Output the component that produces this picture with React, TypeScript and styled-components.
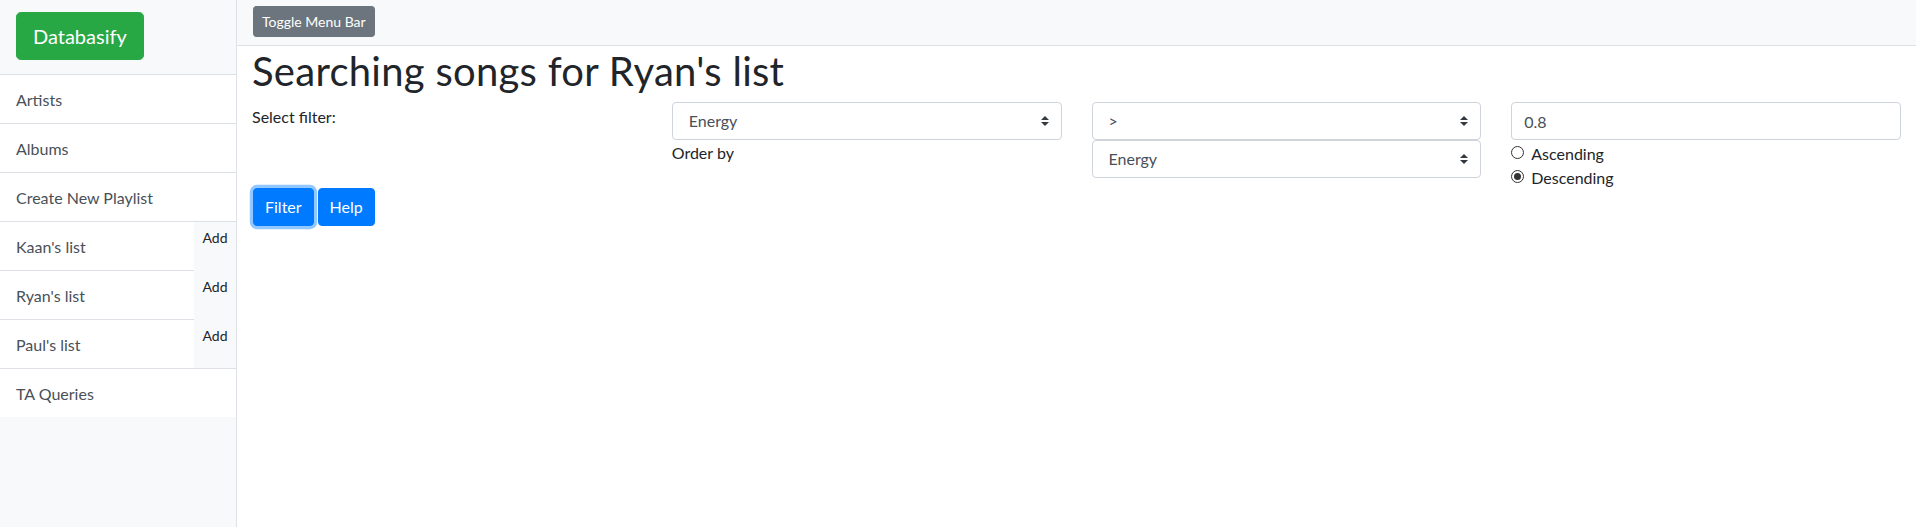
import React from "react";
import styled, { createGlobalStyle } from "styled-components";

const GlobalStyle = createGlobalStyle`
  html, body { margin: 0; padding: 0; }
  body {
    font-family: Lato, "Noto Sans", "Liberation Sans", sans-serif;
    font-size: 16px;
    line-height: 1.5;
    color: #212529;
    background: #fff;
  }
  * { box-sizing: border-box; }
`;

const Layout = styled.div`
  display: flex;
  min-height: 527px;
`;

const Sidebar = styled.nav`
  width: 237px;
  flex: 0 0 237px;
  background: #f8f9fa;
  border-right: 1px solid #dee2e6;
  display: flex;
  flex-direction: column;
`;

const SidebarHeader = styled.div`
  height: 75px;
  padding: 12px 16px 0;
  border-bottom: 1px solid #dee2e6;
`;

const BrandButton = styled.button`
  height: 48px;
  padding: 8px 16px;
  font: inherit;
  font-size: 20px;
  line-height: 1.5;
  color: #fff;
  background: #28a745;
  border: 1px solid #28a745;
  border-radius: 4.8px;
`;

const NavList = styled.div`
  display: flex;
  flex-direction: column;
`;

const NavItem = styled.a<{ $noBorder?: boolean }>`
  display: block;
  flex: 1;
  padding: 13px 16px 11px;
  height: ${(p) => (p.$noBorder ? "48px" : "49px")};
  background: #fff;
  color: #495057;
  text-decoration: none;
  border-bottom: ${(p) => (p.$noBorder ? "none" : "1px solid #dee2e6")};
`;

const PlaylistRow = styled.div<{ $last?: boolean }>`
  display: flex;
  border-bottom: ${(p) => (p.$last ? "1px solid #dee2e6" : "none")};
`;

const AddCell = styled.div`
  width: 42px;
  flex: 0 0 42px;
  padding: 5px 0 0;
  text-align: center;
  font-size: 14px;
  line-height: 1.5;
  color: #212529;
  background: #f8f9fa;
`;

const Main = styled.main`
  flex: 1;
  display: flex;
  flex-direction: column;
  min-width: 0;
`;

const TopBar = styled.div`
  height: 46px;
  padding: 6px 16px 0;
  background: #f8f9fa;
  border-bottom: 1px solid #dee2e6;
`;

const ToggleButton = styled.button`
  height: 31px;
  padding: 4px 8px;
  font: inherit;
  font-size: 14px;
  line-height: 1.5;
  color: #fff;
  background: #6c757d;
  border: 1px solid #6c757d;
  border-radius: 3.2px;
`;

const Heading = styled.h1`
  margin: 0 0 8px;
  padding: 2px 15px 0;
  font-size: 40px;
  font-weight: 400;
  line-height: 46px;
  letter-spacing: 0.27px;
  color: #212529;
`;

const FilterGrid = styled.div`
  display: grid;
  grid-template-columns: repeat(4, 1fr);
`;

const Col = styled.div`
  padding: 0 15px;
  display: flex;
  flex-direction: column;
`;

const Label = styled.label<{ $pt?: number }>`
  display: block;
  padding-top: ${(p) => p.$pt ?? 0}px;
  line-height: 24px;
  color: #212529;
`;

const SelectWrap = styled.div`
  position: relative;
`;

const Select = styled.select`
  display: block;
  width: 100%;
  height: 38px;
  padding: 6px 28px 6px 16px;
  font: inherit;
  font-size: 16px;
  line-height: 1.5;
  color: #495057;
  background: #fff;
  border: 1px solid #ced4da;
  border-radius: 4px;
  appearance: none;
  -webkit-appearance: none;
`;

const Arrow = styled.svg`
  position: absolute;
  right: 13px;
  top: 14px;
  width: 8px;
  height: 10px;
  pointer-events: none;
`;

const TextInput = styled.input`
  display: block;
  width: 100%;
  height: 38px;
  padding: 6px 12px;
  font: inherit;
  font-size: 16px;
  line-height: 1.5;
  color: #495057;
  background: #fff;
  border: 1px solid #ced4da;
  border-radius: 4px;
`;

const RadioLine = styled.label`
  display: flex;
  align-items: center;
  gap: 7px;
  height: 24px;
  color: #212529;
`;

const RadioText = styled.span`
  margin-top: 4px;
`;

const Radio = styled.input`
  appearance: none;
  -webkit-appearance: none;
  width: 13px;
  height: 13px;
  margin: 0;
  flex: 0 0 13px;
  border: 1px solid #333;
  border-radius: 50%;
  background: #fff;
  position: relative;
  &:checked::after {
    content: "";
    position: absolute;
    left: 2px;
    top: 2px;
    width: 7px;
    height: 7px;
    border-radius: 50%;
    background: #333;
  }
`;

const ButtonRow = styled.div`
  display: flex;
  gap: 4px;
  padding: 0 16px;
`;

const PrimaryButton = styled.button<{ $focused?: boolean }>`
  height: 38px;
  padding: 6px 11px;
  font: inherit;
  font-size: 16px;
  line-height: 1.5;
  color: #fff;
  background: #007bff;
  border: 1px solid #007bff;
  border-radius: 4px;
  box-shadow: ${(p) => (p.$focused ? "0 0 0 3.2px rgba(38, 143, 255, 0.5)" : "none")};
`;

const SelectArrow = () => (
  <Arrow viewBox="0 0 4 5">
    <path d="M2 0L0 2h4zm0 5L0 3h4z" fill="#343a40" />
  </Arrow>
);

const Dropdown = ({ value, options }: { value: string; options: string[] }) => (
  <SelectWrap>
    <Select defaultValue={value}>
      {options.map((o) => (
        <option key={o} value={o}>
          {o}
        </option>
      ))}
    </Select>
    <SelectArrow />
  </SelectWrap>
);

const attributes = ["Energy", "Danceability", "Tempo", "Valence", "Loudness"];
const playlists = ["Kaan's list", "Ryan's list", "Paul's list"];

export default function App() {
  return (
    <>
      <GlobalStyle />
      <Layout>
        <Sidebar>
          <SidebarHeader>
            <BrandButton>Databasify</BrandButton>
          </SidebarHeader>
          <NavList>
            <NavItem>Artists</NavItem>
            <NavItem>Albums</NavItem>
            <NavItem>Create New Playlist</NavItem>
            {playlists.map((p, i) => (
              <PlaylistRow key={p} $last={i === playlists.length - 1}>
                <NavItem $noBorder={i === playlists.length - 1}>{p}</NavItem>
                <AddCell>Add</AddCell>
              </PlaylistRow>
            ))}
            <NavItem $noBorder>TA Queries</NavItem>
          </NavList>
        </Sidebar>
        <Main>
          <TopBar>
            <ToggleButton>Toggle Menu Bar</ToggleButton>
          </TopBar>
          <Heading>Searching songs for Ryan's list</Heading>
          <FilterGrid>
            <Col>
              <Label $pt={3}>Select filter:</Label>
            </Col>
            <Col>
              <Dropdown value="Energy" options={attributes} />
              <Label $pt={1}>Order by</Label>
            </Col>
            <Col>
              <Dropdown value=">" options={[">", "<", "="]} />
              <Dropdown value="Energy" options={attributes} />
            </Col>
            <Col>
              <TextInput defaultValue="0.8" />
              <RadioLine>
                <Radio type="radio" name="order" />
                <RadioText>Ascending</RadioText>
              </RadioLine>
              <RadioLine>
                <Radio type="radio" name="order" defaultChecked />
                <RadioText>Descending</RadioText>
              </RadioLine>
            </Col>
          </FilterGrid>
          <ButtonRow>
            <PrimaryButton $focused>Filter</PrimaryButton>
            <PrimaryButton>Help</PrimaryButton>
          </ButtonRow>
        </Main>
      </Layout>
    </>
  );
}
